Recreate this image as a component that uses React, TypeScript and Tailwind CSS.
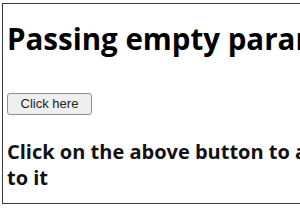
export default function App() {
  return (
    <div className="w-[300px] h-[210px] bg-white overflow-hidden">
      <div
        className="ml-[2px] mt-[3px] h-[201px] w-[480px] border-[1.5px] border-[#3a3a3a] pl-[4px] text-black"
        style={{ fontFamily: '"Open Sans", "Noto Sans", sans-serif' }}
      >
        <h1 className="pt-[17px] text-[29.5px] font-bold leading-[36px] whitespace-nowrap">
          Passing empty parameter
        </h1>
        <button
          className="mt-[36px] h-[22px] w-[85px] rounded-[3px] border border-[#8f8f8f] bg-[#efefef] text-[13px] text-[#222]"
          style={{ fontFamily: '"Liberation Sans", Arial, sans-serif' }}
        >
          Click here
        </button>
        <p className="mt-[24px] text-[20px] font-bold leading-[26px] text-[#111] whitespace-nowrap">
          Click on the above button to add parameter
          <br />
          to it
        </p>
      </div>
    </div>
  )
}
